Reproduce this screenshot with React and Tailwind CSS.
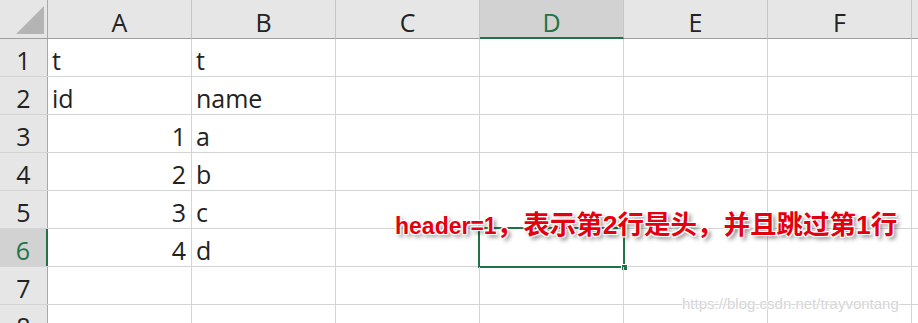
import React from 'react';

const columns = ['A', 'B', 'C', 'D', 'E', 'F'];

const rows = [
  { n: 1, a: 't', b: 't' },
  { n: 2, a: 'id', b: 'name' },
  { n: 3, a: 1, b: 'a' },
  { n: 4, a: 2, b: 'b' },
  { n: 5, a: 3, b: 'c' },
  { n: 6, a: 4, b: 'd' },
  { n: 7 },
  { n: 8 },
];

function CornerCell() {
  return (
    <div className="w-[48px] h-[39px] shrink-0 border-r border-b border-r-[#a8a8a8] border-b-[#9f9f9f] bg-[#e6e6e6]">
      <svg width="47" height="38" viewBox="0 0 47 38" className="block">
        <polygon points="16,34 44,34 44,6" fill="#b4b4b4" />
      </svg>
    </div>
  );
}

function ColumnHeader({ label }) {
  const selected = label === 'D';
  return (
    <div
      className={
        selected
          ? 'w-[144px] h-[39px] shrink-0 flex items-end justify-center pb-[2px] leading-none border-r border-b-2 border-r-[#c6c6c6] border-b-[#217346] bg-[#d2d2d2] text-[#217346]'
          : 'w-[144px] h-[39px] shrink-0 flex items-end justify-center pb-[3px] leading-none border-r border-b border-r-[#c6c6c6] border-b-[#9f9f9f] bg-[#e6e6e6] text-[#222]'
      }
    >
      {label}
    </div>
  );
}

function Cell({ value, right, children }) {
  return (
    <div
      className={
        right
          ? 'relative w-[144px] h-full shrink-0 flex items-end justify-end pr-[5px] pb-[3px] leading-none border-r border-[#d4d4d4]'
          : 'relative w-[144px] h-full shrink-0 flex items-end pl-[4px] pb-[3px] leading-none border-r border-[#d4d4d4]'
      }
    >
      {value}
      {children}
    </div>
  );
}

function Row({ row }) {
  const selected = row.n === 6;
  return (
    <div className="flex h-[38px] border-b border-[#d4d4d4]">
      <div
        className={
          selected
            ? 'w-[48px] h-full shrink-0 flex items-end justify-center pb-[3px] leading-none border-r-2 border-[#217346] bg-[#d2d2d2] text-[#217346]'
            : 'w-[48px] h-full shrink-0 flex items-end justify-center pb-[3px] leading-none border-r border-[#a8a8a8] bg-[#e6e6e6] text-[#222]'
        }
      >
        {row.n}
      </div>
      <Cell value={row.a} right={typeof row.a === 'number'} />
      <Cell value={row.b} />
      <Cell />
      <Cell>
        {selected && (
          <div className="absolute -inset-[2px] border-2 border-[#217346]">
            <div className="absolute right-[-5px] bottom-[-5px] w-[7px] h-[7px] bg-[#217346] border border-white" />
          </div>
        )}
      </Cell>
      <Cell />
      <Cell />
      <div className="flex-1" />
    </div>
  );
}

export default function App() {
  return (
    <div className="relative w-[918px] h-[323px] overflow-hidden bg-white font-['Open_Sans',sans-serif] text-[25px] text-[#222]">
      <div className="flex">
        <CornerCell />
        {columns.map((c) => (
          <ColumnHeader key={c} label={c} />
        ))}
        <div className="flex-1 h-[39px] border-b border-[#9f9f9f] bg-[#e6e6e6]" />
      </div>

      {rows.map((row) => (
        <Row key={row.n} row={row} />
      ))}

      {/* annotation over the grid */}
      <div className="absolute left-[395px] top-[212px] whitespace-nowrap leading-none font-bold font-['Liberation_Sans','Noto_Sans_CJK_SC',sans-serif] text-[26.5px] text-[#e3000f] [text-shadow:1px_1px_0_#fff,-1px_-1px_0_#fff,1px_-1px_0_#fff,-1px_1px_0_#fff,0_0_3px_#fff,3px_3px_4px_rgba(0,0,0,0.5)]">
        <span className="text-[23px]">header=1</span>，表示第2行是头，并且跳过第1行
      </div>

      {/* watermark */}
      <div className="absolute left-[682px] top-[296px] whitespace-nowrap leading-none font-['Liberation_Sans',sans-serif] text-[15px] text-[#d6d6d6] [text-shadow:0_0_2px_#fff,0_0_2px_#fff,0_0_2px_#fff]">
        https://blog.csdn.net/trayvontang
      </div>
    </div>
  );
}
